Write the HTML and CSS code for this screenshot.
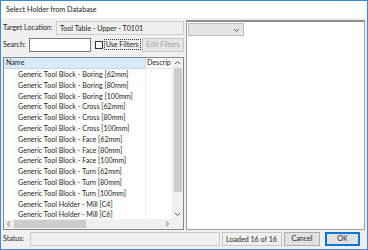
FILE: index.html
```html
<!DOCTYPE html>
<html lang="en">
<head>
    <meta charset="UTF-8">
    <title>Select Holder from Database</title>
    <link rel="stylesheet" href="styles.css">
</head>
<body>

<div class="window">
    <div class="titlebar">Select Holder from Database</div>

    <div class="main">
        <div class="left">
            <div class="row target_row">
                <span class="label">Target Location:</span>
                <div class="box readonly">Tool Table - Upper - T0101</div>
            </div>
            <div class="row search_row">
                <span class="label">Search:</span>
                <div class="box search"></div>
                <label class="check"><span class="tick"></span><span class="check_text">Use Filters</span></label>
                <button class="btn disabled">Edit Filters</button>
            </div>

            <div class="list">
                <div class="list_body">
                    <div class="grid">
                        <div class="head">
                            <div class="col_name hot">Name</div>
                            <div class="col_desc">Descrip</div>
                        </div>
                        <div class="items"></div>
                    </div>
                    <div class="vscroll">
                        <svg class="arrow" width="7" height="10" viewBox="0 0 7 10"><path d="M1 6 L3.5 3.5 L6 6" fill="none" stroke="#606060" stroke-width="1"/></svg>
                        <div class="vthumb"></div>
                        <svg class="arrow down" width="7" height="10" viewBox="0 0 7 10"><path d="M1 4 L3.5 6.5 L6 4" fill="none" stroke="#606060" stroke-width="1"/></svg>
                    </div>
                </div>
                <div class="hscroll">
                    <svg class="arrow" width="10" height="10" viewBox="0 0 10 10"><path d="M6 2.5 L3.5 5 L6 7.5" fill="none" stroke="#606060" stroke-width="1"/></svg>
                    <div class="htrack"><div class="hthumb"></div></div>
                    <svg class="arrow" width="10" height="10" viewBox="0 0 10 10"><path d="M4 2.5 L6.5 5 L4 7.5" fill="none" stroke="#606060" stroke-width="1"/></svg>
                    <div class="corner"></div>
                </div>
            </div>
        </div>

        <div class="right">
            <div class="combo">
                <svg width="7" height="6" viewBox="0 0 7 6"><path d="M1 2 L3.5 4.5 L6 2" fill="none" stroke="#606060" stroke-width="1"/></svg>
            </div>
        </div>
    </div>

    <div class="statusbar">
        <span class="label">Status:</span>
        <div class="box status"></div>
        <div class="box loaded">Loaded 16 of 16</div>
        <button class="btn cancel">Cancel</button>
        <button class="btn ok">OK</button>
    </div>
</div>

<script>
    let holders = [
        "Generic Tool Block - Boring [62mm]",
        "Generic Tool Block - Boring [80mm]",
        "Generic Tool Block - Boring [100mm]",
        "Generic Tool Block - Cross [62mm]",
        "Generic Tool Block - Cross [80mm]",
        "Generic Tool Block - Cross [100mm]",
        "Generic Tool Block - Face [62mm]",
        "Generic Tool Block - Face [80mm]",
        "Generic Tool Block - Face [100mm]",
        "Generic Tool Block - Turn [62mm]",
        "Generic Tool Block - Turn [80mm]",
        "Generic Tool Block - Turn [100mm]",
        "Generic Tool Holder - Mill [C4]",
        "Generic Tool Holder - Mill [C6]"
    ];

    let rows = "";
    holders.forEach(name => {
        rows += `<div class="item"><div class="col_name">${name}</div><div class="col_desc"></div></div>`;
    });
    document.querySelector(".items").innerHTML = rows;
</script>

</body>
</html>
```

FILE: styles.css
```css
* {
    box-sizing: border-box;
}
body {
    margin: 0;
    font-family: Lato, "Open Sans", sans-serif;
    font-size: 7.1px;
    color: #1e1e1e;
    background: #fff;
}
.window {
    width: 368px;
    height: 250px;
    border: 1px solid #3c8ad8;
    background: #f0f0f0;
    display: flex;
    flex-direction: column;
}
.titlebar {
    height: 17px;
    background: #fff;
    padding: 4px 0 0 5px;
    font-size: 7.2px;
    color: #222;
}
.main {
    display: flex;
    height: 212px;
    padding: 1px 0 0 2px;
}
.left {
    width: 181px;
    display: flex;
    flex-direction: column;
}
.row {
    display: flex;
    align-items: center;
    height: 15px;
    white-space: nowrap;
}
.target_row {
    margin-top: 1px;
}
.search_row {
    margin-top: 2px;
}
.label {
    white-space: nowrap;
}
.box {
    height: 14px;
    border: 1px solid #aeaeae;
    background: #fff;
    padding: 2px 0 0 3px;
    white-space: nowrap;
    overflow: hidden;
}
.readonly {
    background: #f0f0f0;
    border-color: #cdcdcd;
    width: 128px;
    margin-left: auto;
}
.search {
    width: 62px;
    margin-left: 3px;
    border-color: #7a7a7a;
}
.check {
    display: flex;
    align-items: center;
    margin-left: 4px;
    white-space: nowrap;
}
.tick {
    width: 8px;
    height: 8px;
    border: 1px solid #333;
    background: #fff;
}
.check_text {
    border: 1px dotted #333;
    padding: 0 1px;
    margin-left: 1px;
    line-height: 9px;
}
.btn {
    font-family: inherit;
    font-size: 7.1px;
    height: 14px;
    padding: 0;
    border: 1px solid #adadad;
    background: #e1e1e1;
    color: #1e1e1e;
    white-space: nowrap;
}
.disabled {
    width: 42px;
    margin-left: auto;
    color: #a0a0a0;
    background: #e6e6e6;
    border-color: #c8c8c8;
}
.list {
    margin-top: 5px;
    width: 181px;
    height: 173px;
    border: 1px solid #828790;
    background: #fff;
    display: flex;
    flex-direction: column;
}
.list_body {
    flex: 1;
    display: flex;
    overflow: hidden;
}
.grid {
    flex: 1;
    overflow: hidden;
}
.head, .item {
    display: flex;
}
.head {
    height: 11px;
    line-height: 10px;
}
.head .col_name {
    padding-left: 2px;
    background: #d9ebf9;
    border-right: 1px solid #c6d5e3;
    border-bottom: 1px solid #c6d5e3;
}
.head .col_desc {
    padding-left: 1px;
    border-bottom: 1px solid #e5e5e5;
}
.items {
    padding-top: 1px;
}
.col_name {
    width: 142px;
    white-space: nowrap;
}
.col_desc {
    flex: 1;
    white-space: nowrap;
}
.item {
    height: 10.8px;
    line-height: 10.8px;
}
.item .col_name {
    padding-left: 14px;
    border-right: 1px solid #f0f0f0;
}
.vscroll {
    width: 11px;
    background: #f0f0f0;
    display: flex;
    flex-direction: column;
    align-items: center;
}
.arrow {
    flex: none;
}
.vthumb {
    width: 8px;
    height: 124px;
    background: #cdcdcd;
}
.down {
    margin-top: auto;
}
.hscroll {
    height: 10px;
    display: flex;
    align-items: center;
    background: #f0f0f0;
}
.htrack {
    flex: 1;
    height: 8px;
}
.hthumb {
    width: 72px;
    height: 8px;
    background: #cdcdcd;
}
.corner {
    width: 11px;
    height: 10px;
}
.right {
    width: 179px;
    margin-left: 2px;
    margin-top: 1px;
    height: 210px;
    border: 1px solid #a0a0a0;
    border-top: 2px solid #8e8e8e;
    background: #fff;
    padding: 1px;
}
.combo {
    width: 56px;
    height: 13px;
    border: 1px solid #c0c0c0;
    background: #e5e5e5;
    display: flex;
    justify-content: flex-end;
    align-items: center;
    padding-right: 3px;
}
.statusbar {
    display: flex;
    align-items: center;
    height: 17px;
    padding-left: 2px;
}
.status {
    width: 190px;
    margin-left: 6px;
    background: #f0f0f0;
    border-color: #c8c8c8;
}
.loaded {
    width: 60px;
    margin-left: 2px;
    padding-left: 3px;
    background: #f0f0f0;
    border-color: #c8c8c8;
}
.cancel {
    width: 36px;
    margin-left: 2px;
}
.ok {
    width: 35px;
    margin-left: 5px;
    border: 2px solid #0078d7;
}
```
